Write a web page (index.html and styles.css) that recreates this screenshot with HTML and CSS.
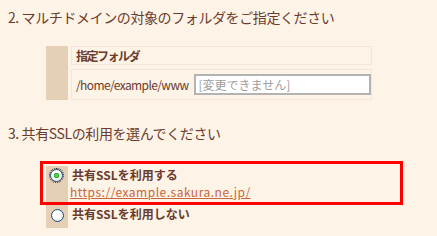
FILE: index.html
```html
<!DOCTYPE html>
<html>
<head>
	<meta charset="utf-8">
	<title></title>
	<link rel="stylesheet" href="styles.css">
</head>
<body>
<div class="page">
	<h2 class="step">2. マルチドメインの対象のフォルダをご指定ください</h2>
	<div class="form-table">
		<div class="side"></div>
		<div class="cell head">指定フォルダ</div>
		<div class="cell"><span class="dir">/home/example/www</span><input class="path" type="text" value="[変更できません]" readonly></div>
	</div>

	<h2 class="step second">3. 共有SSLの利用を選んでください</h2>
	<div class="options">
		<label class="option selected">
			<span class="side"><input type="radio" name="ssl" checked></span>
			<span class="label"><b>共有SSLを利用する</b><a href="#">https://example.sakura.ne.jp/</a></span>
		</label>
		<label class="option">
			<span class="side"><input type="radio" name="ssl"></span>
			<span class="label"><b>共有SSLを利用しない</b></span>
		</label>
	</div>
</div>
</body>
</html>
```

FILE: styles.css
```css
body {margin: 0; background: #fdf3e7; color: #6b3b2d; font-family: "Noto Sans CJK JP", sans-serif; font-size: 12px;}
.step {font-size: 14px; letter-spacing: -0.4px; font-weight: normal; margin: 0; padding: 7px 0 0 8px; line-height: 20px;}
.step.second {margin-top: 23px; padding-top: 0;}

.form-table {display: grid; grid-template-columns: 22px 301px; grid-template-rows: 19px 31px; column-gap: 3px; row-gap: 4px; margin: 19px 0 0 46px;}
.form-table .side {grid-row: 1 / 3; background: #e5cfb5;}
.cell {border: 1px solid #f5e4dc; padding-left: 4px; display: flex; align-items: center;}
.cell.head {font-weight: bold; letter-spacing: -1.5px;}
.dir {letter-spacing: -0.6px;}
.path {margin-left: 6px; width: 179px; height: 21px; box-sizing: border-box; border: 2px solid #b3b3b3; background: #fff; color: #9d9d9d; font-family: inherit; font-size: 12px; padding: 0 2px; outline: none;}

.options {margin: 18px 0 0 40px; width: 363px;}
.option {display: flex;}
.option .side {width: 22px; background: #e5cfb5; flex: none;}
.option .label {display: flex; flex-direction: column; margin-left: 2px; line-height: 17px;}
.option b {padding-left: 2px;}
.option a {color: #c9653a; letter-spacing: 0.5px;}
.option.selected {border: 3px solid #ff0000; padding: 2px 0 0 3px; height: 44px; box-sizing: border-box;}
.option:not(.selected) {margin-left: 6px; height: 23px;}

input[type=radio] {appearance: none; -webkit-appearance: none; width: 13px; height: 13px; margin: 3px 0 0 4px; border: 1px solid #1d5281; border-radius: 50%; background: radial-gradient(circle at 40% 40%, #ffffff 30%, #d8d8d2); box-sizing: border-box; display: block;}
input[type=radio]:checked {background: radial-gradient(circle, #4fd04f 0 1.5px, #1f9b1f 2.5px, transparent 3px), radial-gradient(circle at 40% 40%, #ffffff 30%, #d8d8d2); outline: 1px dotted #222; outline-offset: 0;}
.option:not(.selected) input[type=radio] {margin: 4px 0 0 5px;}
```
